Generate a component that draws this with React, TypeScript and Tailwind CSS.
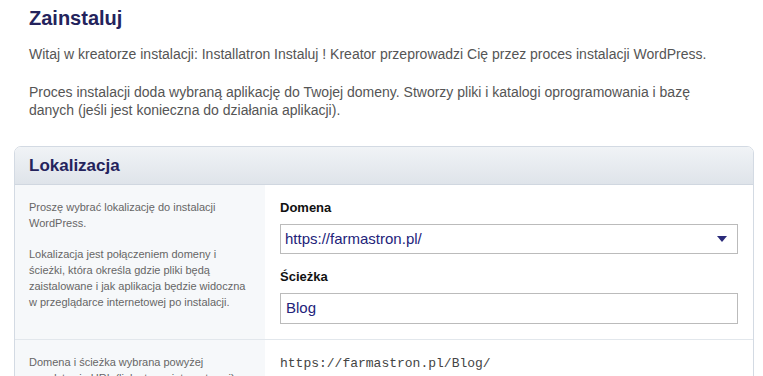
const sans = "font-['Liberation_Sans',Arial,sans-serif]";

function Caret() {
  return (
    <svg width="10" height="6" viewBox="0 0 10 6" className="shrink-0">
      <path d="M0 0 H10 L5 6 Z" fill="#2b2b7a" />
    </svg>
  );
}

export default function App() {
  return (
    <div className={`${sans} min-h-screen bg-white pl-[14px]`}>
      <div className="px-[15px]">
        <h1 className="pt-[6px] text-[20px] font-bold leading-[24px] text-[#24235c]">Zainstaluj</h1>
        <p className="mt-[15px] text-[14px] leading-[18px] text-[#555]">
          Witaj w kreatorze instalacji: Installatron Instaluj ! Kreator przeprowadzi Cię przez proces instalacji WordPress.
        </p>
        <p className="mt-[20px] w-[685px] text-[14px] leading-[18px] text-[#555]">
          Proces instalacji doda wybraną aplikację do Twojej domeny. Stworzy pliki i katalogi oprogramowania i bazę danych
          (jeśli jest konieczna do działania aplikacji).
        </p>
      </div>

      <section className="mt-[27px] w-[740px] overflow-hidden rounded-t-[7px] border border-[#d3dae3]">
        <div className="flex h-[38px] items-center border-b border-[#d0d7e0] bg-gradient-to-b from-[#f0f3f6] to-[#dfe4ea] px-[14px]">
          <h2 className="text-[17px] font-bold text-[#24235c]">Lokalizacja</h2>
        </div>

        <div className="flex border-b border-[#e2e7ec]">
          <div className="w-[250px] shrink-0 bg-[#f6f8fa] px-[14px] pt-[15px] text-[11px] leading-[15.7px] text-[#666]">
            <p>Proszę wybrać lokalizację do instalacji WordPress.</p>
            <p className="mt-[16px]">
              Lokalizacja jest połączeniem domeny i ścieżki, która określa gdzie pliki będą zaistalowane i jak aplikacja będzie widoczna w przeglądarce internetowej po instalacji.
            </p>
          </div>
          <div className="flex-1 px-[15px] pb-[15px] pt-[15px]">
            <label className="block text-[13px] font-bold leading-[16px] text-[#111]">Domena</label>
            <div className="mt-[8px] flex h-[30px] items-center justify-between border border-[#bbb] bg-white pl-[4px] pr-[10px]">
              <span className="text-[15px] text-[#23237a]">https://farmastron.pl/</span>
              <Caret />
            </div>
            <label className="mt-[15px] block text-[13px] font-bold leading-[16px] text-[#111]">Ścieżka</label>
            <div className="mt-[8px] flex h-[31px] items-center border border-[#bbb] bg-white pl-[5px]">
              <span className="text-[15px] text-[#23237a]">Blog</span>
            </div>
          </div>
        </div>

        <div className="flex">
          <div className="w-[250px] shrink-0 bg-[#f6f8fa] px-[14px] pt-[15px] pb-[10px] text-[11px] leading-[15.7px] text-[#666]">
            <p>Domena i ścieżka wybrana powyżej przedstawia URL (link strony internetowej) aplikacji.</p>
          </div>
          <div className="flex-1 px-[15px] pt-[15px] font-['Liberation_Mono','Courier_New',monospace] text-[13px] leading-[18px] text-[#444]">
            https://farmastron.pl/Blog/
          </div>
        </div>
      </section>
    </div>
  );
}
